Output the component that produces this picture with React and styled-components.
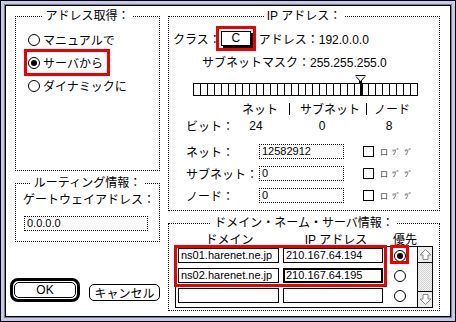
import styled, { createGlobalStyle } from 'styled-components';

const GlobalStyle = createGlobalStyle`
  html, body { margin: 0; padding: 0; background: #fff; }
  body {
    font-family: "Liberation Sans", "Noto Sans CJK JP", sans-serif;
    font-size: 12px;
    color: #000;
  }
  * { box-sizing: border-box; }
`;

const RED = '#ee0000';

const Frame = styled.div`
  width: 456px;
  height: 322px;
  border: 1px solid #000;
  background: #c8c8ea;
  padding: 4px;
`;

const Inner = styled.div`
  width: 100%;
  height: 100%;
  background: #fff;
  border: 1px solid #000;
  box-shadow: 0 0 0 1px #77779a;
  display: flex;
  gap: 8px;
  padding: 3px 10px 0 9px;
`;

const Column = styled.div`
  width: ${p => p.$w}px;
  display: flex;
  flex-direction: column;
`;

const Group = styled.section`
  margin-top: ${p => p.$mt}px;
  height: ${p => p.$h}px;
  border: 1px dotted #000;
  flex: none;
`;

const Legend = styled.h2`
  display: table;
  margin: -8px auto 0;
  padding: 0 3px;
  background: #fff;
  line-height: 14px;
  height: 14px;
  font-size: 12px;
  font-weight: normal;
`;

const RadioRow = styled.div`
  height: 23px;
  display: flex;
  align-items: center;
  padding-left: 12px;
`;

const Choice = styled.span`
  display: inline-flex;
  align-items: center;
  gap: 3px;
  height: 19px;
  outline: ${p => (p.$marked ? `3px solid ${RED}` : 'none')};
  outline-offset: 1px;
  padding-right: 3px;
`;

const Radio = styled.span`
  width: 12px;
  height: 12px;
  border-radius: 50%;
  border: 1px solid #000;
  background: #fff;
  display: inline-flex;
  align-items: center;
  justify-content: center;
  flex: none;
  &::after {
    content: '';
    width: 6px;
    height: 6px;
    border-radius: 50%;
    background: ${p => (p.$on ? '#000' : 'transparent')};
  }
`;

const Label = styled.div`
  height: 16px;
  line-height: 16px;
  margin: ${p => p.$m || '0'};
  white-space: nowrap;
`;

const Field = styled.div`
  width: ${p => p.$w}px;
  height: 15px;
  border: ${p => p.$bw || 1}px ${p => (p.$dotted ? 'dotted' : 'solid')} #000;
  font-size: 11px;
  line-height: ${p => 13 - 2 * ((p.$bw || 1) - 1)}px;
  padding-left: ${p => 3 - (p.$bw || 1)}px;
  margin: ${p => p.$mt || 0}px 0 0 ${p => p.$ml || 0}px;
  background: #fff;
  white-space: nowrap;
  overflow: hidden;
  flex: none;
`;

const ButtonRow = styled.div`
  margin: 36px 0 0 -5px;
  display: flex;
  align-items: flex-start;
  gap: 9px;
`;

const DefaultRing = styled.div`
  width: 73px;
  height: 24px;
  border: 3px solid #000;
  border-radius: 8px;
  padding: 1px;
  display: flex;
`;

const Button = styled.div`
  flex: ${p => (p.$fill ? 1 : 'none')};
  width: ${p => (p.$fill ? 'auto' : '71px')};
  height: ${p => (p.$fill ? 'auto' : '17px')};
  margin-top: ${p => (p.$fill ? 0 : 6)}px;
  border: 1px solid #000;
  border-radius: 5px;
  display: flex;
  align-items: center;
  justify-content: center;
  font-size: 12px;
`;

const Row = styled.div`
  display: flex;
  align-items: center;
  height: ${p => p.$h}px;
  margin-top: ${p => p.$mt || 0}px;
  padding-left: ${p => p.$pl || 0}px;
  white-space: nowrap;
`;

const RowLabel = styled.span`
  width: 73px;
`;

const ClassBox = styled.span`
  width: 30px;
  height: 15px;
  border: 1px solid #000;
  box-shadow: 2px 2px 0 #000;
  display: inline-flex;
  align-items: center;
  justify-content: center;
  outline: 3px solid ${RED};
  outline-offset: 2px;
  margin-right: 8px;
  font-size: 12px;
`;

const SliderWrap = styled.div`
  position: relative;
  margin: 5px 0 0 24px;
  padding-top: 8px;
  width: 225px;
`;

const Bar = styled.div`
  display: flex;
  height: 13px;
  border: 1px solid #000;
  border-right: none;
`;

const Cell = styled.span`
  width: ${p => (p.$cut ? 8 : 7)}px;
  margin-right: ${p => (p.$cut ? -1 : 0)}px;
  border-right: ${p => (p.$cut ? 3 : 1)}px solid #000;
`;

const Marker = styled.svg`
  position: absolute;
  left: 162px;
  top: 0;
`;

const Cols = styled.div`
  display: grid;
  grid-template-columns: ${p => p.$cols};
  align-items: center;
  height: ${p => p.$h || 16}px;
  margin-top: ${p => p.$mt || 0}px;
  padding-left: ${p => p.$pl || 0}px;
  white-space: nowrap;
`;

const Center = styled.span`
  text-align: center;
`;

const Sep = styled.span`
  width: 1px;
  height: 12px;
  background: #000;
`;

const FieldList = styled.div`
  margin-top: 7px;
`;

const Check = styled.span`
  width: 11px;
  height: 11px;
  border: 1px solid #000;
  margin-left: 19px;
  flex: none;
`;

const Tiny = styled.span`
  margin-left: 6px;
  font-size: 8px;
  color: #222;
  letter-spacing: 1px;
`;

const Table = styled.div`
  position: relative;
  display: flex;
  margin: 2px 0 0 6px;
  width: 258px;
`;

const Rows = styled.div`
  width: 243px;
  border: 1px solid #000;
`;

const TRow = styled.div`
  height: 20px;
  display: flex;
  padding-top: 1px;
`;

const RadioCell = styled.div`
  flex: 1;
  display: flex;
  justify-content: center;
  padding-top: 2px;
`;

const Scroll = styled.div`
  width: 16px;
  margin-left: -1px;
  border: 1px solid #000;
  display: flex;
  flex-direction: column;
  justify-content: space-between;
  background: repeating-conic-gradient(#d4d4d4 0 25%, #f2f2f2 0 50%) 0 0 / 2px 2px;
`;

const Arrow = styled.div`
  height: 16px;
  display: flex;
  align-items: center;
  justify-content: center;
  border-${p => (p.$down ? 'top' : 'bottom')}: 1px solid #000;
  background: #ececec;
`;

const Mark = styled.div`
  position: absolute;
  border: 3px solid ${RED};
  pointer-events: none;
`;

function ArrowIcon({ down }) {
  return (
    <svg width="13" height="13" viewBox="0 0 13 13" style={{ transform: down ? 'rotate(180deg)' : 'none' }}>
      <polygon points="6.5,1.5 12,7 9,7 9,11.5 4,11.5 4,7 1,7" fill="#fff" stroke="#888" strokeWidth="1" />
    </svg>
  );
}

const bits = Array.from({ length: 32 });

const servers = [
  { domain: 'ns01.harenet.ne.jp', ip: '210.167.64.194', on: true },
  { domain: 'ns02.harenet.ne.jp', ip: '210.167.64.195', focus: true },
  { domain: '', ip: '' },
];

const fields = [
  ['ネット：', '12582912'],
  ['サブネット：', '0'],
  ['ノード：', '0'],
];

export default function App() {
  return (
    <>
      <GlobalStyle />
      <Frame>
        <Inner>
          <Column $w={145}>
            <Group $mt={7} $h={155}>
              <Legend>アドレス取得：</Legend>
              <div style={{ marginTop: 5 }}>
                <RadioRow>
                  <Choice><Radio />マニュアルで</Choice>
                </RadioRow>
                <RadioRow>
                  <Choice $marked><Radio $on />サーバから</Choice>
                </RadioRow>
                <RadioRow>
                  <Choice><Radio />ダイナミックに</Choice>
                </RadioRow>
              </div>
            </Group>
            <Group $mt={12} $h={59}>
              <Legend>ルーティング情報：</Legend>
              <Label $m="2px 0 0 7px">ゲートウェイアドレス：</Label>
              <Field $w={124} $dotted $ml={8} $mt={8}>0.0.0.0</Field>
            </Group>
            <ButtonRow>
              <DefaultRing>
                <Button $fill>OK</Button>
              </DefaultRing>
              <Button>キャンセル</Button>
            </ButtonRow>
          </Column>

          <Column $w={272}>
            <Group $mt={7} $h={195}>
              <Legend>IP アドレス：</Legend>
              <Row $h={22} $mt={4} $pl={4}>
                クラス：<ClassBox>C</ClassBox>アドレス：192.0.0.0
              </Row>
              <Row $h={18} $mt={3} $pl={33}>サブネットマスク：255.255.255.0</Row>
              <SliderWrap>
                <Marker width="11" height="9" viewBox="0 0 11 9">
                  <path d="M0.5 0.5 H10.5 M1 1.5 L5.5 6.5 L10 1.5" fill="none" stroke="#000" strokeWidth="1" />
                  <rect x="4" y="6" width="3" height="3" fill="#000" />
                </Marker>
                <Bar>
                  {bits.map((_, i) => <Cell key={i} $cut={i === 23} />)}
                </Bar>
              </SliderWrap>
              <Cols $cols="47px 11px 66px 8px auto" $mt={4} $pl={73}>
                <span>ネット</span>
                <Sep />
                <span>サブネット</span>
                <Sep />
                <span>ノード</span>
              </Cols>
              <Cols $cols="48px 44px 88px 46px" $mt={1} $pl={17}>
                <span>ビット：</span>
                <Center>24</Center>
                <Center>0</Center>
                <Center>8</Center>
              </Cols>
              <FieldList>
                {fields.map(([label, value]) => (
                  <Row key={label} $h={22} $pl={17}>
                    <RowLabel>{label}</RowLabel>
                    <Field $w={85} $dotted>{value}</Field>
                    <Check />
                    <Tiny>ロ ﾂﾞ ﾂﾞ</Tiny>
                  </Row>
                ))}
              </FieldList>
            </Group>

            <Group $mt={12} $h={88}>
              <Legend>ドメイン・ネーム・サーバ情報：</Legend>
              <Cols $cols="109px 104px 34px" $pl={6} $h={14}>
                <Center>ドメイン</Center>
                <Center>IP アドレス</Center>
                <Center>優先</Center>
              </Cols>
              <Table>
                <Rows>
                  {servers.map((s, i) => (
                    <TRow key={i}>
                      <Field $w={101} $ml={2}>{s.domain}</Field>
                      <Field $w={100} $ml={4} $bw={s.focus ? 2 : 1}>{s.ip}</Field>
                      <RadioCell><Radio $on={s.on} /></RadioCell>
                    </TRow>
                  ))}
                </Rows>
                <Scroll>
                  <Arrow><ArrowIcon /></Arrow>
                  <Arrow $down><ArrowIcon down /></Arrow>
                </Scroll>
                <Mark style={{ left: -1, top: -1, width: 213, height: 42 }} />
                <Mark style={{ left: 215, top: -1, width: 19, height: 19 }} />
              </Table>
            </Group>
          </Column>
        </Inner>
      </Frame>
    </>
  );
}
